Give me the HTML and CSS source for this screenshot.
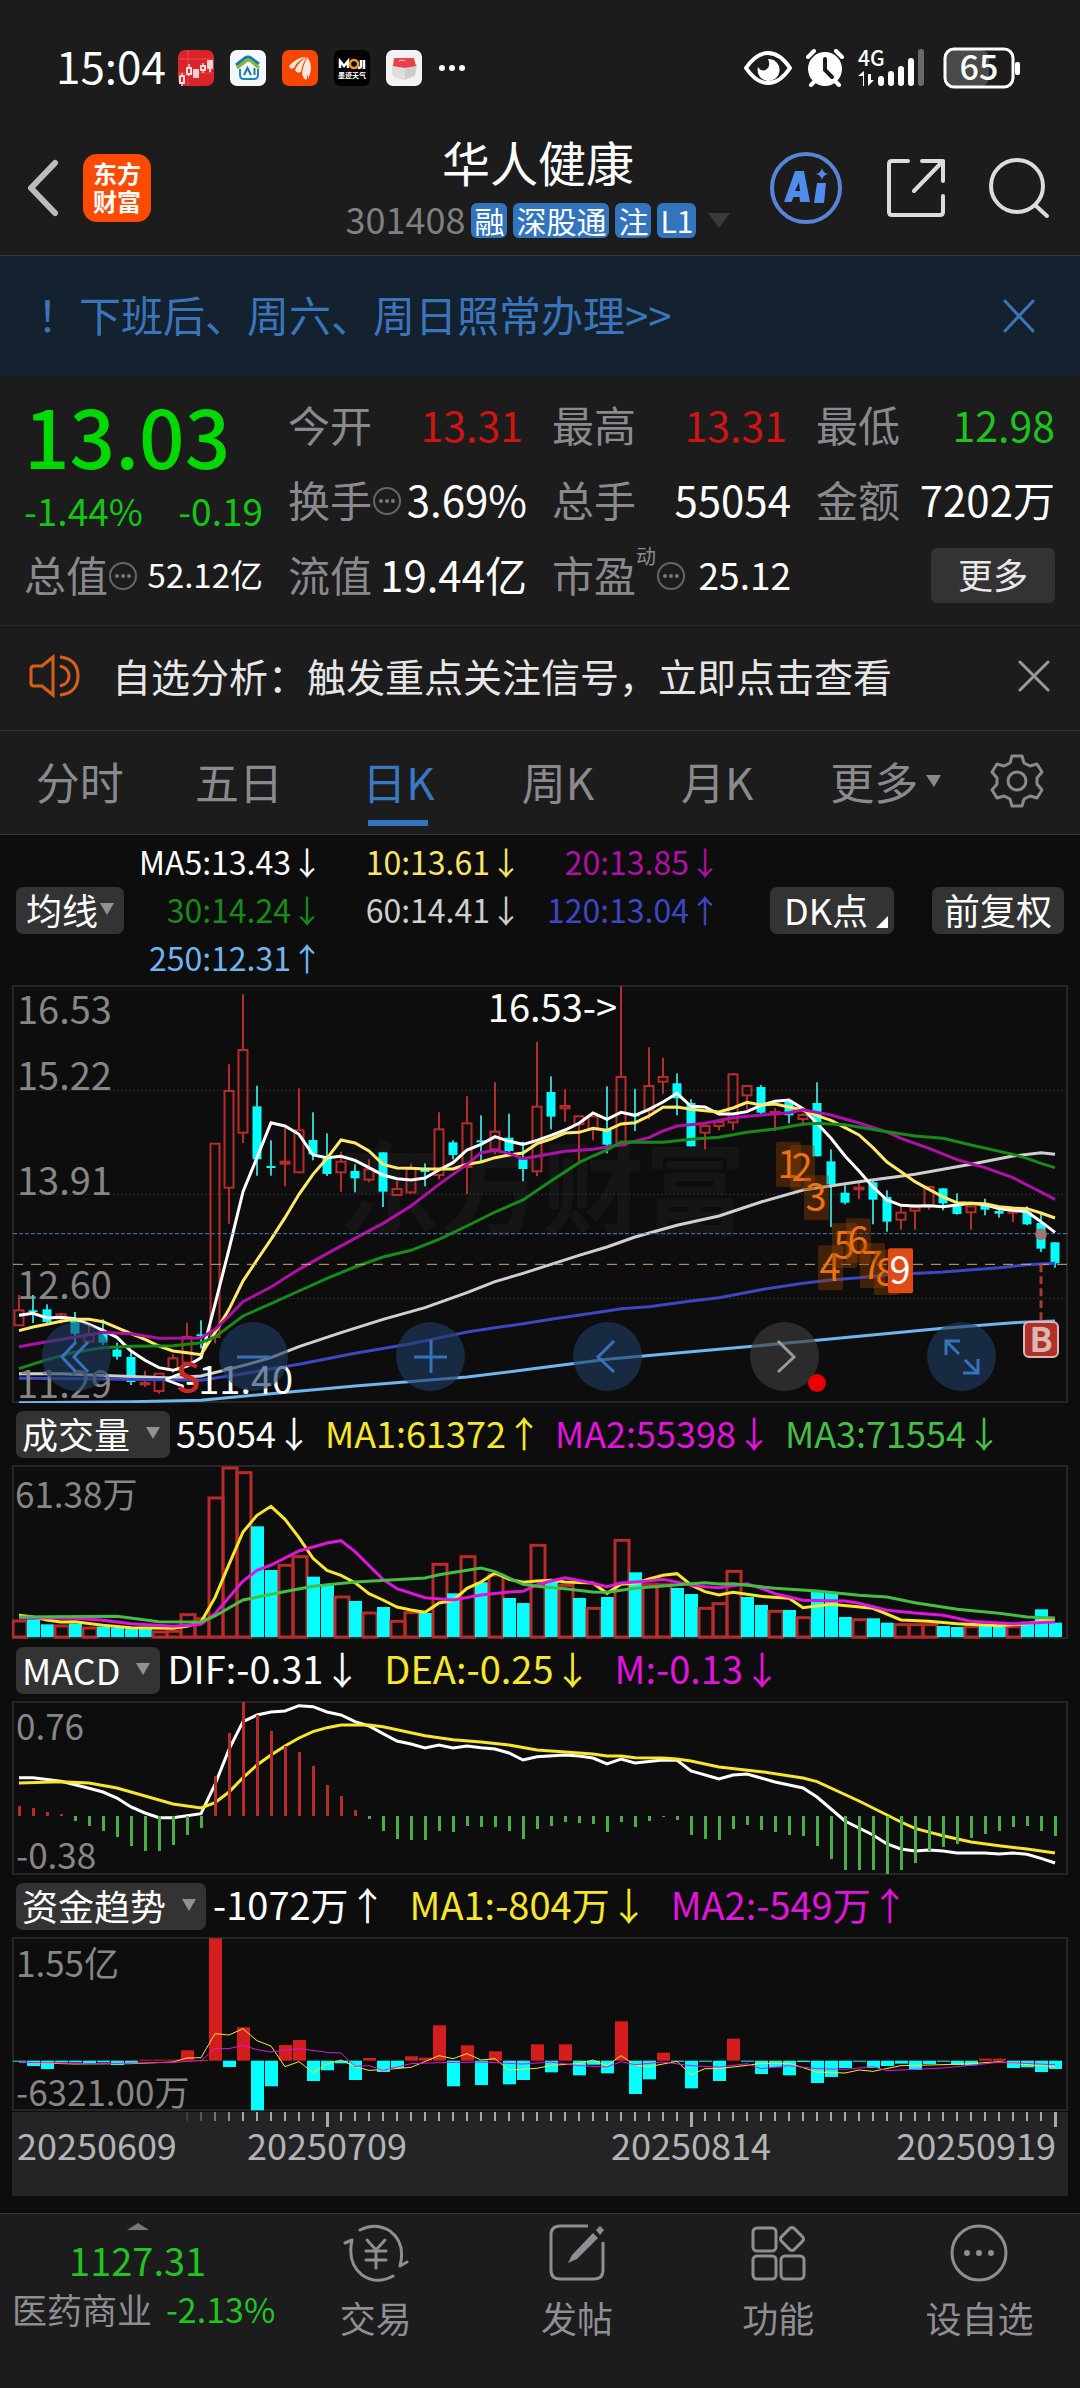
FILE: index.html
```html
<!DOCTYPE html>
<html lang="zh-CN">
<head>
<meta charset="utf-8">
<meta name="viewport" content="width=device-width, initial-scale=1">
<title>华人健康 301408</title>
<link rel="stylesheet" href="styles.css">
</head>
<body>
<div class="status">
  <span class="clock">15:04</span>
  <div class="status-apps">
    <svg viewBox="0 0 36 36" width="36" height="36"><rect width="36" height="36" rx="7" fill="#d9242a"/><path d="M0 9h36M0 23h36M10 0v36" stroke="#e5484b" stroke-width="1"/><path d="M4 23v13M11 14v12M25 13v10" stroke="#f7cfcf" stroke-width="1.500"/><path d="M2 26h4v7H2zM9 18h4v6H9zM23 16h4v4h-4z" fill="#d9242a" stroke="#f9dcdc" stroke-width="2"/><path d="M15 19h6v9h-6zM29 10h6v9h-6zM31 19h2v3h-2z" fill="#f7cfcf"/></svg>
    <svg viewBox="0 0 36 36" width="36" height="36"><rect width="36" height="36" rx="7" fill="#f6f7f8"/><path d="M6 15l9-7q3-2 6 0l8 6" fill="none" stroke="#1c78ad" stroke-width="3"/><path d="M7 18l9-7q3-2 6 1l7 6" fill="none" stroke="#84b83b" stroke-width="3"/><path d="M10 19v6q0 4 4 4h10q4 0 4-4v-6" fill="none" stroke="#1c86c4" stroke-width="2"/><path d="M14 25l3.500-7 3.500 7M24.500 18v7" fill="none" stroke="#1c78ad" stroke-width="2"/></svg>
    <svg viewBox="0 0 36 36" width="36" height="36"><rect width="36" height="36" rx="7" fill="#f54700"/><path d="M7 16q8-9 17-9-9 4-12 11-4 2-5-2zM13 20q4-9 12-13-5 7-6 15-4 2-6-2zM20 24q1-10 6-17 0 9 0 17-1 4-2 6-3-2-4-6zM26 8q6 9 0 21z" fill="#ffe9df"/></svg>
    <svg viewBox="0 0 36 36" width="36" height="36"><rect width="36" height="36" rx="7" fill="#000"/><path d="M6 18v-7l4 5 4-5v7M27 10v6q0 2-3 2M30 10v9" fill="none" stroke="#fff" stroke-width="2.500"/><circle cx="20" cy="14" r="4" fill="none" stroke="#f39a1e" stroke-width="2.500"/><text x="18" y="28" class="micro">墨迹天气</text></svg>
    <svg viewBox="0 0 36 36" width="36" height="36"><rect width="36" height="36" rx="7" fill="#f3f3f3"/><path d="M6 14l13 5 12-5-2 12-11 4-11-4z" fill="#cfcccc"/><path d="M6 14l13 4v12L7 26z" fill="#dedcdc"/><path d="M8 8h20l2 8-11 2-12-2z" fill="#e74247"/><path d="M13 11q3-2 6 0" fill="none" stroke="#ffc9ca"/></svg>
    <svg viewBox="0 0 28 8" width="28" height="8" fill="#fff"><circle cx="4" cy="4" r="3"/><circle cx="14" cy="4" r="3"/><circle cx="24" cy="4" r="3"/></svg>
  </div>
  <div class="status-sys">
    <svg viewBox="0 0 48 34" width="48" height="34"><path d="M2 17Q12 2 24 2t22 15Q36 32 24 32T2 17z" fill="none" stroke="#fff" stroke-width="4"/><path d="M24 8a11 11 0 1 1-10 8q4 6 9 2 4-4 1-10z" fill="#fff"/></svg>
    <svg viewBox="0 0 38 38" width="38" height="38"><path d="M2 8l6-6M36 8l-6-6M5 36l5-5M33 36l-5-5" stroke="#fff" stroke-width="4" stroke-linecap="round"/><circle cx="19" cy="20" r="17" fill="#fff"/><path d="M19 10v11l7 7" fill="none" stroke="#1c1c1c" stroke-width="4" stroke-linecap="round"/></svg>
    <svg class="signal" viewBox="0 0 68 40" width="68" height="40" fill="#fff"><text x="0" y="18" class="net">4G</text><path d="M5 38V28H0l6-5v15zM10 26v12l6-6h-3v-6z"/><rect x="20" y="28" width="6" height="10" rx="3"/><rect x="30" y="23" width="6" height="15" rx="3"/><rect x="40" y="18" width="6" height="20" rx="3"/><rect x="50" y="10" width="6" height="28" rx="3"/><rect x="60" y="1" width="6" height="37" rx="3" fill="#6a6a6a"/></svg>
    <svg class="signal" viewBox="0 0 80 42" width="80" height="42"><rect x="6" y="3" width="43" height="36" rx="8" fill="#4a4a4a"/><rect x="5" y="2" width="68" height="38" rx="9" fill="none" stroke="#fff" stroke-width="3"/><rect x="75" y="15" width="5" height="13" rx="2" fill="#fff"/><text x="39" y="33" class="batt">65</text></svg>
  </div>
</div>

<header class="top">
  <div class="top-left">
    <button class="icon-btn" aria-label="返回"><svg viewBox="0 0 34 58" width="34" height="58"><path d="M29 4L5 29l24 25" fill="none" stroke="#bcbcbc" stroke-width="6" stroke-linecap="round" stroke-linejoin="round"/></svg></button>
    <div class="logo">东方<br>财富</div>
  </div>
  <div class="top-title">
    <h1>华人健康</h1>
    <div class="code"><span>301408</span><b>融</b><b>深股通</b><b>注</b><b>L1</b><svg viewBox="0 0 22 15" width="22" height="15"><path d="M0 0h22L11 15z" fill="#3a3a3a"/></svg></div>
  </div>
  <div class="top-right">
    <button class="icon-btn" aria-label="AI"><svg viewBox="0 0 72 74" width="72" height="74"><circle cx="36" cy="37" r="34" fill="none" stroke="#5686d8" stroke-width="4"/><path d="M25 20h9l6 31h-10l-.5-5h-6l-2 5H14zM29 31l-4 9h5zM47 32h9l-2 20H44zM52 17q1 5 6 6-5 1-6 6-1-5-6-6 5-1 6-6z" fill="#4f8cee" fill-rule="evenodd"/></svg></button>
    <button class="icon-btn" aria-label="分享"><svg viewBox="0 0 60 62" width="60" height="62" fill="none" stroke="#dcdcdc" stroke-width="4" stroke-linecap="round" stroke-linejoin="round"><path d="M23 4H7Q4 4 4 7v48q0 3 3 3h48q3 0 3-3V39M37 4h21v20M58 4L29 34"/></svg></button>
    <button class="icon-btn" aria-label="搜索"><svg viewBox="0 0 62 62" width="62" height="62" fill="none" stroke="#dcdcdc" stroke-width="4" stroke-linecap="round"><circle cx="29" cy="29" r="26"/><path d="M47 48l12 11"/></svg></button>
  </div>
</header>

<div class="banner">
  <a href="#service">！下班后、周六、周日照常办理&gt;&gt;</a>
  <button class="icon-btn" aria-label="关闭"><svg viewBox="0 0 32 34" width="32" height="34"><path d="M2 2l28 30M30 2L2 32" stroke="#3a75bc" stroke-width="3" stroke-linecap="round"/></svg></button>
</div>

<section class="quote">
  <div class="last"><strong>13.03</strong><p><span>-1.44%</span><span>-0.19</span></p></div>
  <div class="cell"><span>今开</span><em class="up">13.31</em></div>
  <div class="cell"><span>最高</span><em class="up">13.31</em></div>
  <div class="cell"><span>最低</span><em class="down">12.98</em></div>
  <div class="cell"><span>换手</span><svg class="info"><use href="#info"/></svg><em>3.69%</em></div>
  <div class="cell"><span>总手</span><em>55054</em></div>
  <div class="cell"><span>金额</span><em>7202万</em></div>
  <div class="cell"><span>总值</span><svg class="info"><use href="#info"/></svg><em class="small">52.12亿</em></div>
  <div class="cell"><span>流值</span><em>19.44亿</em></div>
  <div class="cell"><span>市盈</span><sup>动</sup><svg class="info"><use href="#info"/></svg><em class="mid">25.12</em></div>
  <div class="cell"><button class="more">更多</button></div>
</section>
<svg class="defs" width="0" height="0"><symbol id="info" viewBox="0 0 30 30"><circle cx="15" cy="15" r="13" fill="none" stroke="#66666a" stroke-width="2"/><circle cx="9" cy="15" r="2" fill="#77777b"/><circle cx="15" cy="15" r="2" fill="#77777b"/><circle cx="21" cy="15" r="2" fill="#77777b"/></symbol></svg>

<div class="notice">
  <svg viewBox="0 0 54 46" width="54" height="46" fill="none" stroke="#d85f1b" stroke-width="3"><path d="M25 4v38L14 33H6q-3 0-3-3V16q0-3 3-3h8zM32 4q18 2 18 19T32 42M32 13q9 2 9 10t-9 10"/></svg>
  <p>自选分析：触发重点关注信号，立即点击查看</p>
  <button class="icon-btn" aria-label="关闭"><svg viewBox="0 0 32 32" width="32" height="32"><path d="M2 2l28 28M30 2L2 30" stroke="#9a9a9a" stroke-width="3" stroke-linecap="round"/></svg></button>
</div>

<nav class="tabs">
  <button>分时</button><button>五日</button><button class="on">日K</button><button>周K</button><button>月K</button>
  <button>更多<svg viewBox="0 0 15 12" width="15" height="12"><path d="M0 0h15L8 12z" fill="#8a8a8e"/></svg></button>
  <button aria-label="设置"><svg viewBox="0 0 54 54" width="54" height="54" fill="none" stroke="#8a8a8e" stroke-width="3" stroke-linejoin="round"><path d="M22 2h10l2 7 6 3 7-2 5 8-5 6v6l5 6-5 8-7-2-6 3-2 7H22l-2-7-6-3-7 2-5-8 5-6v-6l-5-6 5-8 7 2 6-3z"/><circle cx="27" cy="27" r="9"/></svg></button>
</nav>

<main class="charts">
  <div class="ma">
    <button class="chip">均线<svg viewBox="0 0 14 12" width="14" height="12"><path d="M0 0h14L7 12z" fill="#909095"/></svg></button>
    <div class="ma-grid">
      <span class="c-white">MA5:13.43↓</span><span class="c-yellow">10:13.61↓</span><span class="c-magenta">20:13.85↓</span>
      <span class="c-green">30:14.24↓</span><span class="c-grey">60:14.41↓</span><span class="c-blue">120:13.04↑</span>
      <span class="c-sky">250:12.31↑</span>
    </div>
    <button class="chip dk">DK点<svg viewBox="0 0 12 12" width="12" height="12"><path d="M12 0v12H0z" fill="#fff"/></svg></button>
    <button class="chip">前复权</button>
  </div>

  <div class="price">
    <svg id="price" viewBox="0 0 1056 418" role="img" aria-label="日K线"></svg>
    <div class="tools">
      <button aria-label="最左"><svg viewBox="0 0 69 69"><path d="M34 20L20 35l14 15M46 20L32 35l14 15"/></svg></button>
      <button aria-label="缩小"><svg viewBox="0 0 69 69"><path d="M18 35h33"/></svg></button>
      <button aria-label="放大"><svg viewBox="0 0 69 69"><path d="M18 35h33M35 18v33"/></svg></button>
      <button aria-label="左移"><svg viewBox="0 0 69 69"><path d="M41 19L25 35l16 15"/></svg></button>
      <button aria-label="右移" class="off"><svg viewBox="0 0 69 69"><path d="M28 19l16 16-16 15"/></svg></button>
      <button aria-label="全屏"><svg viewBox="0 0 69 69"><path d="M19 33V19h14M19 19l13 13M36 51h15V37M51 51L38 38"/></svg></button>
    </div>
  </div>

  <div class="ind vol"><button class="chip">成交量<svg viewBox="0 0 14 12" width="14" height="12"><path d="M0 0h14L7 12z" fill="#909095"/></svg></button><span>55054↓</span><span class="v-yellow">MA1:61372↑</span><span class="v-magenta">MA2:55398↓</span><span class="v-green">MA3:71554↓</span></div>
  <svg id="volume" viewBox="0 0 1056 174" role="img" aria-label="成交量"></svg>

  <div class="ind"><button class="chip">MACD<svg viewBox="0 0 14 12" width="14" height="12"><path d="M0 0h14L7 12z" fill="#909095"/></svg></button><span>DIF:-0.31↓</span><span class="v-yellow">DEA:-0.25↓</span><span class="v-magenta">M:-0.13↓</span></div>
  <svg id="macd" viewBox="0 0 1056 174" role="img" aria-label="MACD"></svg>

  <div class="ind"><button class="chip">资金趋势<svg viewBox="0 0 14 12" width="14" height="12"><path d="M0 0h14L7 12z" fill="#909095"/></svg></button><span>-1072万↑</span><span class="v-yellow">MA1:-804万↓</span><span class="v-magenta">MA2:-549万↑</span></div>
  <svg id="funds" viewBox="0 0 1056 174" role="img" aria-label="资金趋势"></svg>
  <svg id="axis" viewBox="0 0 1056 85" role="img" aria-label="日期"></svg>
</main>

<nav class="bottom">
  <a class="sector" href="#sector"><svg viewBox="0 0 22 7" width="22" height="7"><path d="M0 7L11 0l11 7z" fill="#77777b"/></svg><b>1127.31</b><span>医药商业<i>-2.13%</i></span></a>
  <a href="#trade"><svg viewBox="0 0 66 60" width="66" height="60" fill="none" stroke="#8e8e93" stroke-width="3" stroke-linecap="round" stroke-linejoin="round"><path d="M17 7q15-8 30 1 16 12 10 35l7-4M50 53Q34 62 19 52 4 40 9 17l-7 3"/><path d="M24 17l9 10 9-10M33 27v18M23 28h20M23 37h20"/></svg><span>交易</span></a>
  <a href="#post"><svg viewBox="0 0 58 60" width="58" height="60" fill="none" stroke="#8e8e93" stroke-width="3"><path d="M40 3H12Q3 3 3 12v35q0 9 9 9h34q9 0 9-9V19"/><path d="M20 40l4-8 21-22 5 5-21 21zM48 7l4-4 4 4-4 5z" fill="#8e8e93" stroke="none"/></svg><span>发帖</span></a>
  <a href="#tools"><svg viewBox="0 0 56 60" width="56" height="60" fill="none" stroke="#8e8e93" stroke-width="3" stroke-linejoin="round"><rect x="3" y="5" width="23" height="23" rx="4"/><rect x="3" y="33" width="23" height="23" rx="4"/><rect x="31" y="33" width="23" height="23" rx="4"/><rect x="33" y="7" width="18" height="18" rx="3" transform="rotate(45 42 16)"/></svg><span>功能</span></a>
  <a href="#watch"><svg viewBox="0 0 60 60" width="60" height="60"><circle cx="30" cy="30" r="27" fill="none" stroke="#8e8e93" stroke-width="3"/><g fill="#8e8e93"><circle cx="18" cy="30" r="3"/><circle cx="30" cy="30" r="3"/><circle cx="42" cy="30" r="3"/></g></svg><span>设自选</span></a>
</nav>
<script src="charts.js"></script>
</body>
</html>
```
FILE: styles.css
```css
* { box-sizing: border-box; }
body {
  margin: 0;
  background: #1c1c1c;
  color: #fff;
  font-family: "Noto Sans CJK SC", "Noto Sans", sans-serif;
  font-size: 36px;
  line-height: 48px;
}
h1, p { margin: 0; font-weight: 400; }
b, em, i, strong { font-style: normal; font-weight: 400; }
svg { display: block; flex: none; }
button { border: 0; margin: 0; padding: 0; background: none; color: inherit; font: inherit; }
a { color: inherit; text-decoration: none; }
.defs { position: absolute; }
.icon-btn { display: flex; flex: none; }

.status { display: flex; align-items: center; height: 136px; padding: 0 60px 0 56px; }
.clock { font-size: 44px; width: 122px; padding-bottom: 6px; }
.status-apps { display: flex; align-items: center; gap: 16px; flex: 1; }
.status-sys { display: flex; align-items: center; gap: 14px; }
.signal { overflow: visible; }
.micro { font-size: 7px; font-weight: 700; fill: #fff; text-anchor: middle; }
.net { font-size: 21px; font-weight: 500; }
.batt { font-size: 34px; font-weight: 500; fill: #fff; text-anchor: middle; }

.top { display: grid; grid-template-columns: 1fr auto 1fr; height: 120px; padding: 0 30px 0 26px; border-bottom: 1px solid #333b41; }
.top-left, .top-right { display: flex; align-items: center; padding-bottom: 16px; }
.top-left { gap: 23px; }
.top-right { gap: 43px; justify-content: flex-end; }
.logo { width: 68px; height: 68px; border-radius: 14px; background: #ff4a02; font-size: 24px; line-height: 28px; font-weight: 700; text-align: center; padding-top: 5px; }
.top-title { text-align: center; }
.top-title h1 { font-size: 48px; line-height: 50px; }
.code { display: flex; align-items: center; justify-content: center; gap: 6px; height: 68px; color: #808084; }
.code span { padding-bottom: 4px; }
.code b { background: #3374be; color: #fff; border-radius: 6px; font-size: 30px; line-height: 35px; padding: 0 3px; }
.code svg { margin-left: 6px; }

.banner { display: flex; align-items: center; justify-content: space-between; height: 120px; padding: 0 45px 0 37px; background: #14212f; color: #3a75bc; font-size: 42px; }
.banner a { padding-bottom: 4px; }

.quote { display: grid; grid-template-columns: repeat(4, 1fr); grid-auto-rows: 75px; column-gap: 25px; padding: 12px 25px 12px 24px; border-bottom: 1px solid #2b2b2b; }
.last { grid-row: span 2; color: #14c614; }
.last strong { display: block; font-size: 80px; line-height: 92px; font-weight: 500; color: #00d900; }
.last p { display: flex; justify-content: space-between; line-height: 60px; font-size: 37px; }
.cell { display: flex; align-items: center; font-size: 42px; }
.cell span, .cell em { padding-bottom: 4px; }
.cell span { color: #8a8a8e; }
.cell em { margin-left: auto; }
.cell .small { font-size: 33px; }
.cell .mid { font-size: 37px; }
.cell .up, .cell .down { font-size: 41px; }
.cell .up { color: #cf1414; padding-right: 4px; }
.cell .down { color: #1cc41c; }
.cell sup { align-self: flex-start; font-size: 20px; line-height: 20px; padding-top: 8px; color: #8a8a8e; }
.info { width: 30px; height: 30px; }
.more { margin-left: auto; width: 124px; padding-bottom: 4px; line-height: 51px; border-radius: 6px; background: #333; font-size: 35px; color: #e8e8e8; }

.notice { display: flex; align-items: center; height: 105px; padding: 0 30px 4px 28px; border-bottom: 1px solid #333; }
.notice p { flex: 1; padding: 0 0 3px 30px; font-size: 39px; color: #e6e6e6; }

.tabs { display: grid; grid-template-columns: repeat(5, 160fr) 178fr 86fr; height: 104px; padding-right: 20px; border-bottom: 1px solid #333; color: #8a8a8e; font-size: 44px; }
.tabs button { display: flex; align-items: center; justify-content: center; gap: 8px; padding-bottom: 4px; }
.tabs .on { color: #3a78c3; background: linear-gradient(#3374be, #3374be) center bottom 8px / 60px 6px no-repeat; }

.charts { background: #0d0d0d; padding: 0 12px 17px; }
.charts > svg, .price svg { width: 100%; height: auto; }
.ma { display: flex; align-items: center; height: 150px; padding: 0 4px; }
.ma-grid { display: grid; grid-template-columns: repeat(3, 199px); font-size: 32px; text-align: right; flex: 1; padding-bottom: 2px; }
.chip { display: flex; align-items: center; gap: 6px; height: 47px; padding: 0 10px 2px; border-radius: 7px; background: #333; font-size: 36px; }
.ma .chip { padding: 0 12px 2px; }
.ma .chip:first-child { gap: 2px; padding: 0 10px 2px; }
.ma .dk { align-items: center; gap: 8px; padding: 0 6px 2px 14px; margin-right: 38px; }
.dk svg { align-self: flex-end; margin-bottom: 4px; }
.ind { display: flex; align-items: center; gap: 23px; height: 62px; padding-left: 4px; font-size: 38px; }
.ind .chip { gap: 16px; margin-right: -16px; padding: 0 10px 2px 6px; }
.ind span { padding-bottom: 4px; }
.vol { gap: 13px; font-size: 36px; }
.vol .chip { margin-right: -7px; }
.c-white { color: #fff; } .c-yellow { color: #f9e468; } .c-magenta { color: #b010a8; }
.c-green { color: #178a17; } .c-grey { color: #cfcfcf; } .c-blue { color: #3b48c4; } .c-sky { color: #6fb6f0; }
.v-yellow { color: #f8e62c; } .v-magenta { color: #e014dc; } .v-green { color: #46be46; }

.price { position: relative; }
.tools { position: absolute; left: 30px; right: 72px; bottom: 12px; display: flex; justify-content: space-between; }
.tools button { width: 69px; height: 69px; border-radius: 50%; background: rgba(30, 62, 100, .62); }
.tools path { fill: none; stroke: #3573bb; stroke-width: 3; }
.tools .off { background: rgba(60, 60, 60, .65); position: relative; }
.tools .off path { stroke: #9a9a9a; }
.tools .off::after { content: ""; position: absolute; right: -7px; bottom: -1px; width: 18px; height: 18px; border-radius: 50%; background: #e80000; }

.frame { fill: none; stroke: #262626; stroke-width: 2; }
.grid { stroke: #303030; stroke-width: 1; stroke-dasharray: 2 2; }
.line { fill: none; stroke-width: 3; }
.thin { stroke-width: 1; }
.label { fill: #868686; font-size: 38px; }
.label.sm { font-size: 35px; }
.date { fill: #b4b4b4; font-size: 36px; }
.mark { fill: #fff; font-size: 38px; }
.end { text-anchor: end; }
.mid-t { text-anchor: middle; }
.water { fill: #151515; font-size: 102px; font-weight: 700; text-anchor: middle; }
.sell { fill: #c62828; font-size: 40px; font-weight: 500; text-anchor: middle; }
.buy { fill: #d9b8b4; font-size: 34px; font-weight: 700; text-anchor: middle; }
.seq { fill: #ee7212; font-size: 38px; text-anchor: middle; }

.bottom { display: grid; grid-template-columns: 275fr 201fr 201fr 201fr 201fr; height: 176px; border-top: 1px solid #333; color: #8e8e93; }
.bottom a { display: flex; flex-direction: column; align-items: center; padding-top: 9px; }
.bottom a > span { line-height: 68px; }
.sector b { font-size: 38px; line-height: 52px; color: #22c422; padding-top: 4px; }
.bottom .sector > span { font-size: 35px; line-height: 46px; display: flex; gap: 14px; padding-left: 12px; }
.sector i { font-size: 34px; color: #22c422; }
```
FILE: charts.js
```js
// All series share one horizontal step per trading day; vertical values are in thirds of a unit.
const STEP = 14, X0 = 7;
const RED = '#b92b2b', CYAN = '#00ffff';
const px = i => X0 + STEP * i;
const n = v => +v.toFixed(2);
const scale = top => v => n((v - top) / 3 + 1);
const line = (pts, y, color, cls = '') =>
  `<polyline class="line ${cls}" stroke="${color}" points="${pts.split(' ').map(p => { const [i, v] = p.split(','); return px(+i) + ',' + y(+v); }).join(' ')}"/>`;
const frame = h => `<rect class="frame" x="1" y="1" width="1054" height="${h - 2}"/>`;
const rect = (x, y, w, h, a) => `<rect x="${n(x)}" y="${n(y)}" width="${n(w)}" height="${n(Math.max(h, 1))}" ${a}/>`;
const text = (x, y, c, s) => `<text x="${x}" y="${y}" class="${c}">${s}</text>`;

/* ---- daily candles: kind, high, body top, body bottom, low ---- */
const candles = `r 972 1018 1063 1063;c 972 1018 1023 1056;c 1000 1015 1053 1056;r 1025 1030 1042 1058;c 1023 1048 1088 1115;r 1060 1090 1112 1117;c 1045 1088 1115 1122;c 1115 1136 1157 1166;c 1145 1158 1233 1242;r 1200 1236 1240 1248;r 1208 1208 1260 1268;r 1150 1162 1197 1205;r 1055 1098 1175 1180;c 1048 1090 1096 1132;r 518 518 1098 1117;r 280 360 650 758;r 70 237 485 516;c 344 406 565 614;c 508 585 591 614;r 470 572 578 646;r 352 478 604 604;c 424 507 550 568;c 487 555 609 615;r 542 572 604 662;c 580 600 622 664;r 565 595 626 634;c 544 544 662 708;r 630 654 672 672;r 578 593 664 668;c 577 597 603 646;r 424 475 612 625;c 508 514 552 565;r 376 457 588 669;c 433 508 514 572;r 334 482 535 550;c 428 500 540 545;c 512 565 594 631;r 213 407 601 616;c 316 363 437 475;r 355 405 412 452;r 436 436 460 580;r 436 436 475 508;c 346 475 521 547;r 45 318 523 523;c 354 430 436 480;r 229 345 418 445;r 260 318 332 368;c 307 337 382 433;c 385 396 526 526;r 460 465 485 535;r 445 453 465 478;r 306 310 454 478;r 343 345 373 415;c 342 348 425 436;r 412 423 428 480;c 390 393 433 457;r 425 432 444 465;c 334 396 556 556;c 535 571 640 768;c 643 665 695 700;r 635 650 655 685;c 630 634 686 760;c 658 678 752 782;r 700 725 746 776;r 700 709 719 776;r 647 648 705 716;c 652 652 697 718;c 667 700 729 731;r 700 706 724 776;c 683 700 716 733;c 715 720 728 740;r 720 722 724 753;c 706 722 760 762;c 730 756 833 843;c 814 814 877 890`.split(';').map(s => s.split(' '));

(function price() {
  const y = scale(45);
  let s = text(530, 242, 'water', '东方财富') + frame(418);
  for (const g of [358, 670, 982]) s += `<path class="grid" d="M1 ${y(g)}H1055"/>`;
  s += [[1, 16.53, 39], [2, 15.22, 105], [3, 13.91, 210], [4, 12.6, 314]].map(a => text(5, a[2], 'label', a[1].toFixed(2))).join('');
  candles.forEach(([k, h, t, b, l], i) => {
    const x = px(i), [yh, yt, yb, yl] = [h, t, b, l].map(v => y(+v));
    if (k === 'c') s += rect(x - 1, yh, 2, yl - yh, 'fill="#33c9c9"') + rect(x - 4.5, yt, 9, yb - yt, `fill="${CYAN}"`);
    else s += `<path d="M${x} ${yh}V${yt}M${x} ${yb}V${yl}" stroke="${RED}" stroke-width="2"/>` + rect(x - 4.5, yt, 9, yb - yt, `fill="none" stroke="${RED}" stroke-width="2"`);
  });
  s += line('0,1208 3,1208 7,1215 11,1221 13,1215 16,1184 18,1160 20,1127 23,1085 26,1045 29,1010 32,965 34,932 36,907 38,880 40,853 42,828 44,798 47,763 50,735 53,693 56,657 60,632 64,610 68,580 71,555 73,545 74,550', y, '#cfcfcf');
  s += line('0,1222 6,1224 13,1228 16,1208 20,1180 24,1147 28,1118 32,1083 36,1058 38,1045 42,1020 43,1013 45,1007 48,990 50,980 53,956 56,937 58,927 60,920 62,911 66,903 70,890 72,881 74,877', y, '#3b48c4');
  s += line('0,1295 8,1292 13,1288 17,1272 24,1245 32,1218 37,1192 42,1165 50,1135 57,1108 66,1072 71,1055 74,1050', y, '#6fb6f0');
  s += line('0,1033 1,1027 2,1041 3,1039 4,1043 5,1060 6,1078 7,1099 8,1140 9,1168 10,1190 11,1198 12,1185 13,1160 14,1000 15,835 16,662 17,560 18,455 19,465 20,490 21,552 22,560 23,556 24,568 25,590 26,612 27,623 28,627 29,621 30,597 31,575 32,537 33,520 34,497 35,511 36,520 37,508 38,493 39,477 40,457 41,426 42,445 43,424 44,433 45,415 46,393 47,367 48,406 49,408 50,429 51,429 52,422 53,403 54,391 55,387 56,413 57,457 58,502 59,555 60,600 61,648 62,687 63,703 64,705 65,704 66,707 67,702 68,697 69,701 70,713 71,718 72,722 73,752 74,784', y, '#fff');
  s += line('0,1079 1,1068 2,1060 3,1051 4,1045 5,1045 6,1052 7,1070 8,1088 9,1105 10,1125 11,1140 12,1145 13,1151 14,1085 15,1015 16,930 17,867 18,805 19,740 20,670 21,610 22,562 23,507 24,516 25,540 26,580 27,591 28,592 29,594 31,594 32,580 33,573 34,560 35,552 36,546 37,518 38,504 39,486 40,484 41,472 42,478 43,459 44,455 45,435 46,409 47,408 48,415 49,419 50,423 51,411 52,394 53,402 54,399 55,408 56,417 57,434 58,448 59,470 60,492 61,530 62,573 63,602 64,632 65,655 66,678 67,695 69,698 70,707 71,711 72,713 73,726 74,741', y, '#ffe96a');
  s += line('0,1127 2,1112 4,1099 6,1084 8,1088 10,1102 13,1101 14,1075 15,1035 16,992 18,948 20,895 22,848 24,802 26,757 28,705 30,640 32,580 33,545 34,538 35,547 36,563 37,556 39,541 41,535 43,521 45,500 46,480 47,465 49,457 51,440 53,432 55,425 56,416 58,432 60,456 62,483 63,502 65,532 67,566 69,590 71,620 72,642 73,663 74,685', y, '#b010a8');
  s += line('0,1193 2,1166 4,1143 6,1130 8,1126 11,1124 13,1115 14,1098 16,1035 18,998 20,960 22,922 24,888 26,858 28,838 30,805 32,765 34,723 36,687 38,630 40,575 41,555 42,537 43,513 46,514 48,505 50,499 52,484 54,474 56,460 57,457 59,461 62,482 64,495 66,502 68,522 71,550 72,562 73,577 74,590', y, '#178a17');
  s += `<path d="M1 ${y(788)}H1055" stroke="#4679b3" stroke-dasharray="4 2"/><path d="M1 ${y(880)}H1055" stroke="#d8a46c" stroke-dasharray="10 8"/>`;
  s += text(5, 413, 'label', '11.29');
  [[55, 513], [56, 522], [57, 613], [58, 823], [59, 756], [60, 742], [61, 816], [62, 837], [63, 832]].forEach(([i, v], k) => {
    const x = px(i) - 1, last = k === 8;
    s += rect(x - 12, y(v), 25, 45, `rx="2" fill="${last ? '#e04a16' : 'rgba(150,65,0,.38)'}"`);
    s += `<text x="${x}" y="${y(v) + 36}" class="seq" ${last ? 'style="fill:#fff"' : ''}>${k + 1}</text>`;
  });
  s += `<circle cx="${px(73)}" cy="${y(790)}" r="6" fill="#b8625c" opacity=".85"/><path d="M${px(73)} ${y(880)}V337" stroke="#a83a32" stroke-width="3" stroke-dasharray="8 4"/>`;
  s += `<rect x="1012" y="337" width="34" height="35" rx="5" fill="#b23028" stroke="#d9b8b4" stroke-width="2"/>` + text(1029, 367, 'buy', 'B');
  s += text(605, 37, 'mark end', '16.53-&gt;') + text(152, 409, 'mark', '&lt;-11.40') + text(176, 407, 'sell', 'S');
  document.getElementById('price').innerHTML = s;
})();

(function volume() {
  const y = scale(195);
  let s = frame(174) + text(3, 43, 'label sm', '61.38万');
  'r657 c655 c670 r672 c668 r678 c677 c680 c680 c683 r690 r688 r638 r650 r288 r198 r212 c376 c507 r490 r464 c527 c550 r585 c600 r633 c618 r658 r632 c636 r487 c577 r464 c544 r519 c591 c606 r430 c540 r550 c591 r619 c588 r415 c514 r548 r548 c561 c579 r619 r605 r508 c588 c612 r628 c627 r647 c572 c576 c648 r653 c652 c665 r668 r668 r668 c675 c678 r674 c675 c678 r674 c662 c625 c665'.split(' ').forEach((b, i) => {
    const t = y(+b.slice(1)), x = px(i);
    s += b[0] === 'c' ? rect(x - 6, t, 13, 172 - t, `fill="${CYAN}"`) : rect(x - 6, t + 1, 14, 171 - t, `fill="none" stroke="${RED}" stroke-width="3"`);
  });
  s += line('0,643 1,648 2,657 3,663 4,662 6,673 8,680 11,682 12,676 13,663 14,590 15,490 16,393 17,343 18,316 19,355 20,410 21,472 22,508 23,523 24,545 25,578 26,597 27,618 28,627 29,634 30,606 31,599 32,562 33,543 34,516 35,535 36,544 37,540 38,538 39,543 41,546 42,577 43,550 44,547 45,534 46,523 47,518 48,552 49,572 50,582 51,574 53,586 55,592 56,620 58,610 61,622 63,657 65,661 67,668 70,674 72,668 73,660 74,656', y, '#f8e62c');
  s += line('0,650 4,652 6,658 8,668 11,676 13,670 14,638 16,540 17,508 18,492 20,450 22,426 23,419 24,452 26,535 27,563 29,590 31,597 33,582 35,573 36,571 37,552 38,540 39,530 41,547 42,557 43,546 45,540 46,535 48,552 49,557 50,560 52,548 53,562 54,578 56,598 59,600 60,607 62,628 64,636 66,643 68,661 71,668 74,663', y, '#e014dc');
  s += line('0,648 7,646 10,662 13,663 14,645 16,597 18,580 21,556 24,543 29,531 30,521 33,501 34,512 36,550 37,556 39,563 41,573 42,574 44,562 48,548 49,545 50,549 51,548 54,562 57,570 60,583 62,588 64,605 67,625 70,637 72,648 74,651', y, '#46be46');
  document.getElementById('volume').innerHTML = s;
})();

(function macd() {
  const y = scale(903), zero = y(1245);
  let s = frame(174) + text(4, 39, 'label sm', '0.76') + text(4, 168, 'label sm', '-0.38');
  s += line('0,1130 1,1130 3,1141 5,1162 6,1173 7,1191 8,1218 9,1236 10,1250 11,1250 13,1238 14,1150 15,1045 16,962 17,942 18,933 19,930 20,914 21,917 22,933 23,942 24,962 25,975 26,998 27,1020 28,1029 29,1041 30,1032 31,1041 32,1035 33,1040 34,1044 35,1056 36,1077 37,1067 39,1062 40,1065 41,1071 42,1089 43,1074 44,1086 46,1077 47,1078 48,1110 50,1134 51,1122 52,1119 54,1143 56,1161 57,1188 58,1224 59,1260 61,1302 62,1329 63,1344 64,1350 65,1347 66,1350 67,1356 69,1356 70,1359 71,1356 72,1360 73,1372 74,1386', y, '#fff');
  s += line('0,1146 3,1142 5,1146 7,1161 9,1185 11,1209 13,1221 14,1205 15,1173 16,1130 17,1092 18,1062 19,1035 20,1011 21,992 22,980 23,972 25,972 26,977 29,1004 31,1016 33,1023 35,1032 37,1047 39,1053 41,1059 42,1065 43,1065 44,1070 46,1071 47,1074 48,1080 50,1098 53,1112 56,1131 57,1142 60,1200 63,1263 64,1282 66,1304 68,1323 70,1334 72,1344 74,1356', y, '#f8e62c');
  [1215, 1221, 1233, 1239, 1260, 1275, 1290, 1308, 1335, 1350, 1350, 1332, 1302, 1281, 1125, 996, 903, 942, 990, 1035, 1053, 1095, 1152, 1185, 1227, 1254, 1290, 1314, 1317, 1317, 1290, 1293, 1275, 1278, 1278, 1290, 1314, 1284, 1275, 1263, 1266, 1269, 1293, 1263, 1278, 1260, 1248, 1257, 1302, 1314, 1317, 1284, 1272, 1287, 1293, 1302, 1305, 1335, 1374, 1407, 1407, 1407, 1419, 1407, 1386, 1350, 1338, 1329, 1311, 1299, 1290, 1278, 1275, 1290, 1305].forEach((v, i) => {
    const e = y(v);
    s += rect(px(i) - 1, Math.min(e, zero), 3, Math.abs(e - zero), `fill="${v < 1245 ? RED : '#46b046'}"`);
  });
  document.getElementById('macd').innerHTML = s;
})();

(function funds() {
  const y = scale(200), zero = y(568);
  let s = frame(174) + text(4, 40, 'label sm', '1.55亿') + text(4, 169, 'label sm', '-6321.00万');
  [571, 584, 593, 573, 573, 578, 573, 581, 575, 565, 565, 565, 537, 566, 201, 587, 468, 717, 645, 521, 506, 629, 597, 576, 626, 560, 602, 590, 555, 559, 462, 645, 522, 641, 540, 639, 626, 519, 603, 519, 612, 580, 606, 450, 668, 624, 544, 570, 651, 570, 629, 502, 570, 608, 588, 612, 572, 635, 617, 590, 570, 590, 584, 577, 596, 578, 570, 581, 582, 562, 562, 590, 588, 602, 593].forEach((v, i) => {
    const e = y(v);
    s += rect(px(i) - 6, Math.min(e, zero), 13, Math.abs(e - zero), `fill="${v < 568 ? '#d41e1e' : CYAN}"`);
  });
  s += line('0,573 4,578 8,577 11,572 12,560 13,559 14,487 15,491 16,472 17,508 18,524 19,586 20,571 21,604 22,578 23,566 24,586 25,597 26,595 28,588 30,553 31,562 32,547 33,566 34,562 35,596 37,591 38,582 40,577 41,566 42,583 43,553 44,582 45,586 46,578 47,570 48,610 49,592 50,592 52,582 53,576 55,576 57,602 59,605 60,596 61,600 63,583 66,580 68,577 70,571 72,580 74,586', y, '#f8e62c', 'thin');
  s += line('0,573 6,577 11,573 13,568 14,532 15,532 16,522 17,535 18,542 20,532 22,543 23,545 24,585 25,583 26,597 28,577 30,574 33,572 36,578 38,572 40,583 42,587 43,571 44,580 46,572 48,583 50,587 52,577 53,592 55,583 57,592 59,594 61,586 62,598 66,590 70,573 74,580', y, '#e014dc', 'thin');
  document.getElementById('funds').innerHTML = s;
})();

(function axis() {
  let s = '<rect y="1" width="1056" height="84" fill="#242427"/>';
  for (let i = 12; i < 75; i++) {
    const major = i === 22 || i === 48 || i === 74;
    s += rect(px(i) - 1, 1, major ? 3 : 2, major ? 15 : 9, `fill="#a8a8a8" opacity="${Math.min(1, (i - 11) / 5)}"`);
  }
  s += text(5, 49, 'date', '20250609') + text(315, 49, 'date mid-t', '20250709') + text(679, 49, 'date mid-t', '20250814') + text(1044, 49, 'date end', '20250919');
  document.getElementById('axis').innerHTML = s;
})();
```
